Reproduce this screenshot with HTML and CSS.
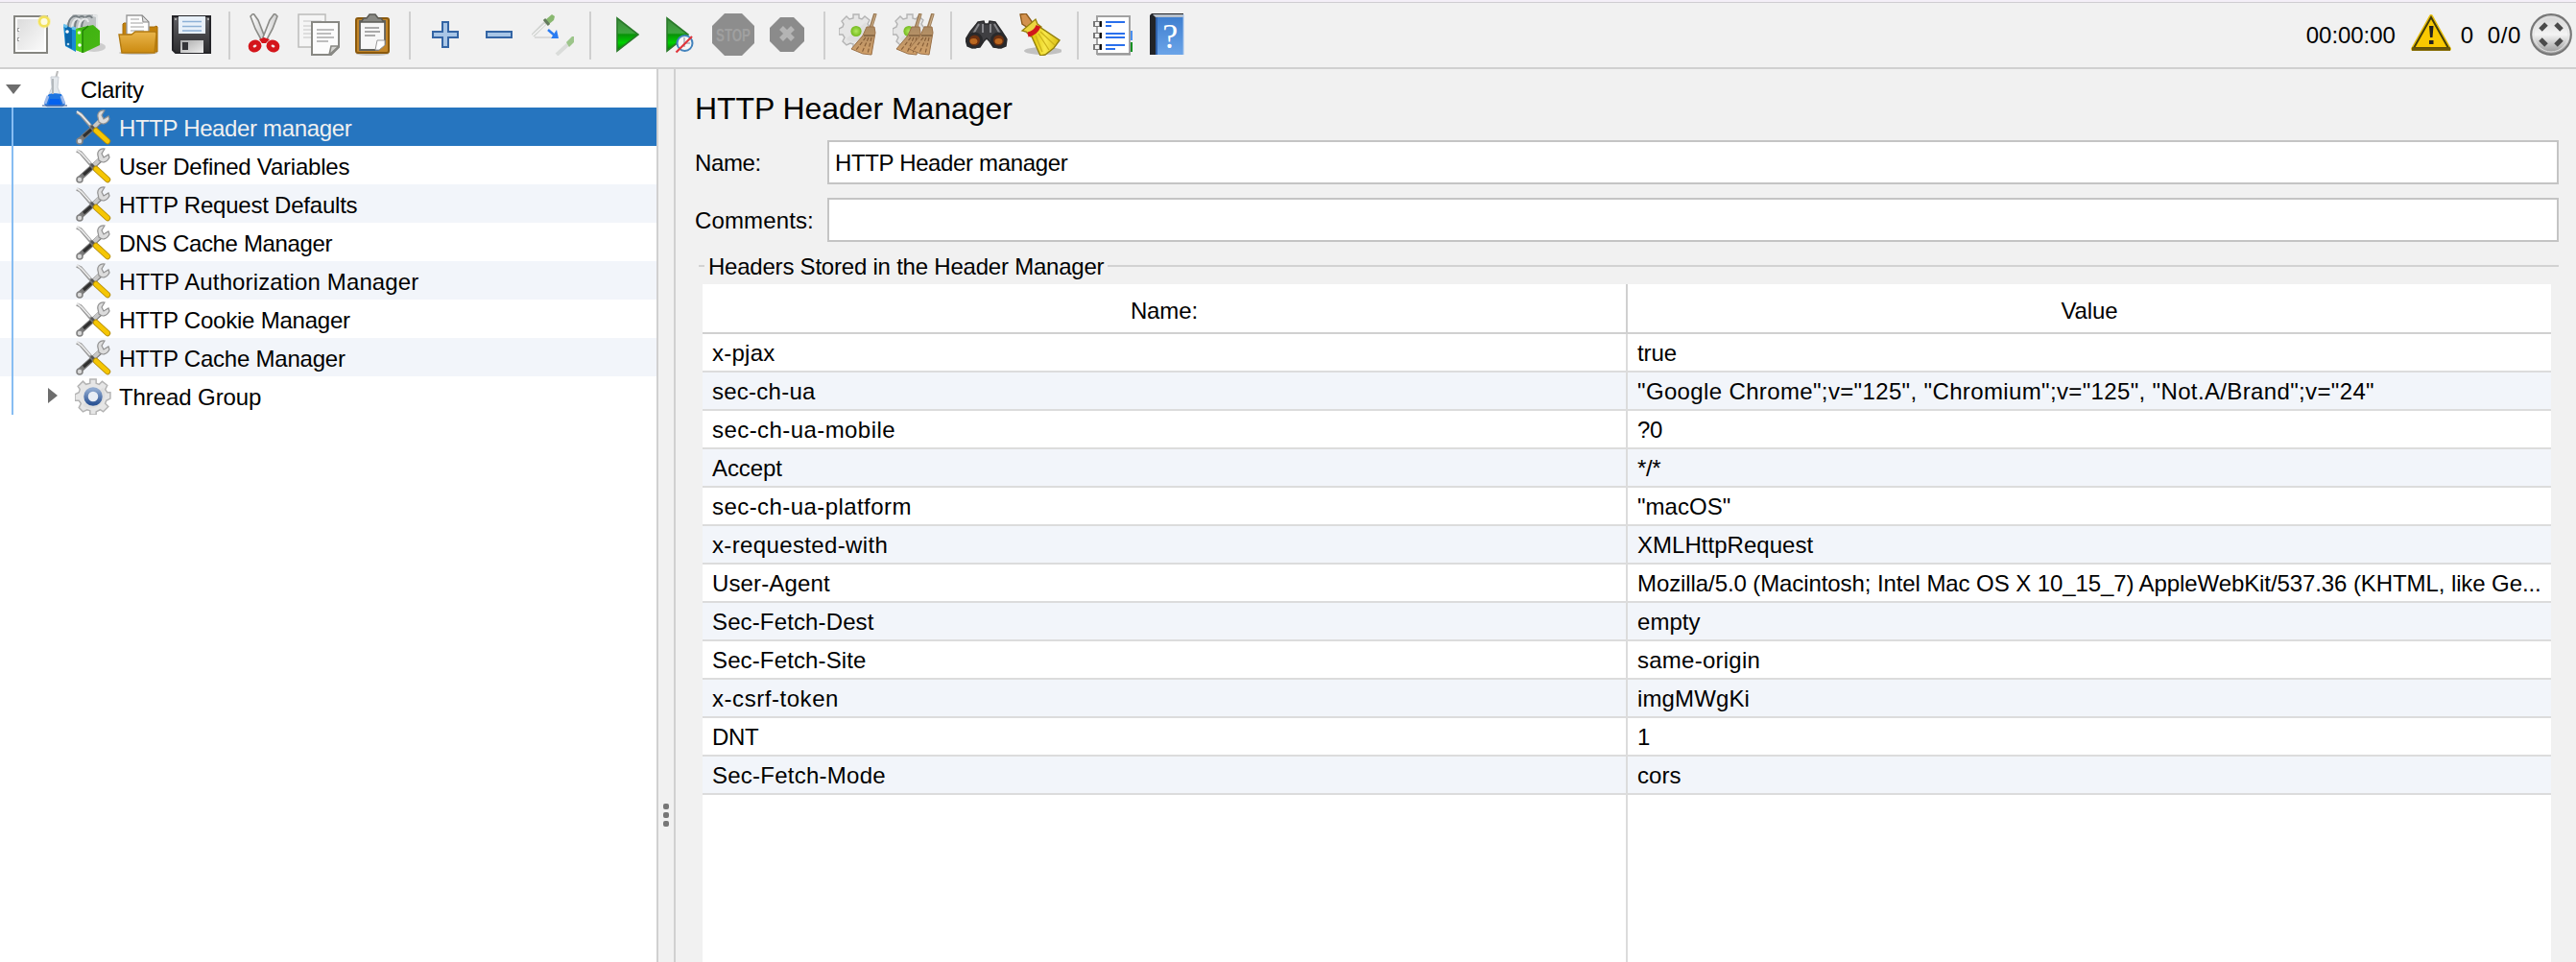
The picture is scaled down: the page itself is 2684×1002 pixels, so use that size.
FILE: index.html
```html
<!DOCTYPE html>
<html lang="en">
<head>
<meta charset="utf-8">
<title>HTTP Header Manager</title>
<link rel="stylesheet" href="styles.css">
</head>
<body>
<svg class="defs" aria-hidden="true">
  <defs>
    <linearGradient id="paper" x1="0" y1="0" x2="1" y2="1"><stop offset="0" stop-color="#dcdcdc"/><stop offset="1" stop-color="#fafafa"/></linearGradient>
    <linearGradient id="folder" x1="0" y1="0" x2="0" y2="1"><stop offset="0" stop-color="#e9b54b"/><stop offset="1" stop-color="#cb8a10"/></linearGradient>
    <linearGradient id="leaf" x1="0" y1="0" x2="1" y2="1"><stop offset="0" stop-color="#3db010"/><stop offset="1" stop-color="#48b814"/></linearGradient>
    <linearGradient id="play" x1="0" y1="0" x2="0" y2="1"><stop offset="0" stop-color="#3c8c3c"/><stop offset=".45" stop-color="#3fa63f"/><stop offset=".5" stop-color="#089208"/><stop offset=".75" stop-color="#00d000"/><stop offset="1" stop-color="#007a00"/></linearGradient>
    <linearGradient id="blade" x1="0" y1="0" x2="1" y2="0"><stop offset="0" stop-color="#fff"/><stop offset="1" stop-color="#ccc"/></linearGradient>
    <linearGradient id="straw" x1="0" y1="0" x2="1" y2="0"><stop offset="0" stop-color="#dcc000"/><stop offset=".5" stop-color="#f8e84a"/><stop offset="1" stop-color="#d8bc10"/></linearGradient>
    <linearGradient id="book" x1="0" y1="0" x2="0" y2="1"><stop offset="0" stop-color="#3f7fd0"/><stop offset="1" stop-color="#6ba4e8"/></linearGradient>
    <linearGradient id="metal" x1="0" y1="0" x2="0" y2="1"><stop offset="0" stop-color="#d2d2d2"/><stop offset=".5" stop-color="#f4f4f4"/><stop offset="1" stop-color="#909090"/></linearGradient>
    <linearGradient id="slider" x1="0" y1="0" x2="1" y2="1"><stop offset="0" stop-color="#aaa"/><stop offset="1" stop-color="#eee"/></linearGradient>
    <linearGradient id="dark" x1="0" y1="0" x2="0" y2="1"><stop offset="0" stop-color="#606064"/><stop offset="1" stop-color="#2c2c2e"/></linearGradient>
    <linearGradient id="ring" x1="0" y1="0" x2="0" y2="1"><stop offset="0" stop-color="#8fa9cf"/><stop offset="1" stop-color="#2d5596"/></linearGradient>
    <linearGradient id="bristle" x1="0" y1="0" x2="0" y2="1"><stop offset="0" stop-color="#ab8b64"/><stop offset="1" stop-color="#d2a069"/></linearGradient>
    <radialGradient id="ball"><stop offset="0" stop-color="#b2ea60"/><stop offset="1" stop-color="#73b91c"/></radialGradient>
  </defs>
  <symbol id="gear" viewBox="0 0 36 36">
    <path d="M15 5V1h6v4l3 1 3-3 5 4-2 4 2 3h3v6l-4 2-1 3 3 3-5 5-3-2-4 2v3h-6v-4l-3-1-4 2-4-4 2-4-2-3H0v-6l4-2 1-3-2-3 5-5 3 3z" fill="#e6e6e6" stroke="#b4b4b4" stroke-width="1.4"/>
    <path d="M8 26l20-17a14 14 0 0 1-19 19z" fill="#d4d4d4" opacity=".45"/>
  </symbol>
  <symbol id="broom" viewBox="0 0 28 44">
    <path d="M26 0L21 16" stroke="#9a7a55" stroke-width="3.6"/>
    <path d="M26 1L22 14" stroke="#c8ab85" stroke-width="1.2"/>
    <path d="M17 14h8l1 6-4 23-9-1-12-5 12-14z" fill="url(#bristle)" stroke="#9a7148" stroke-width="1"/>
    <path d="M14 23h11" stroke="#8c6c48" stroke-width="2"/>
    <path d="M16 25L6 38M19 25l-7 16M22 25l-4 17" stroke="#845c36" stroke-width="1.1" stroke-dasharray="4 2"/>
  </symbol>
  <symbol id="tools" viewBox="0 0 38 38">
    <path d="M2 3l4 2 12 14" fill="none" stroke="#969696" stroke-width="3.6"/>
    <path d="M2 2l5 4 9 10" fill="none" stroke="#e8e8e8" stroke-width="1.8"/>
    <path d="M6 31L27 12" stroke="#777" stroke-width="5.4" stroke-linecap="round"/>
    <path d="M20 18L28 10" stroke="#c8c8c8" stroke-width="4"/>
    <path d="M9 28l8-7" stroke="#303030" stroke-width="3"/>
    <circle cx="5" cy="33" r="3" fill="#d8d8d8" stroke="#838383" stroke-width="1.6"/>
    <path d="M31 1c-5-1-8 3-7 7l1 5c3 3 8 3 11-3l-1-3-5 3-2-4z" fill="#dcdcdc" stroke="#919191" stroke-width="1.2"/>
    <path d="M17 17l5 5" stroke="#555" stroke-width="2.4"/>
    <path d="M22 22l12 11" stroke="#b28b08" stroke-width="6.4" stroke-linecap="round"/>
    <path d="M22 22l12 11" stroke="#f5c604" stroke-width="4.6" stroke-linecap="round"/>
  </symbol>
</svg>

<header class="toolbar">
  <div class="group">
    <svg class="icon" viewBox="0 0 44 44"><rect x="5" y="3" width="34" height="38" fill="#fff" stroke="#858580" stroke-width="2"/><rect x="8" y="6" width="28" height="32" fill="url(#paper)"/><path d="M8 17h2M8 27h2" stroke="#999" stroke-width="4"/><path d="M9 17h2M9 27h2" stroke="#fff" stroke-width="2"/><circle cx="36" cy="8.500" r="7" fill="#f6eca0" opacity=".7"/><circle cx="36" cy="8.500" r="4.800" fill="#fdfbe0" stroke="#f3e25a" stroke-width="2.500"/></svg>
    <svg class="icon" viewBox="0 0 44 44"><ellipse cx="32" cy="35" rx="12" ry="5" fill="#999" opacity=".4"/><path d="M3 12L10 1h22l4 1v14l-6 6H4z" fill="#bfc3c5"/><path d="M5 14C5 3 14 0 16 5M12 15C12 3 21 0 23 6M19 14C20 3 28 0 30 5" fill="none" stroke="#777f83" stroke-width="2"/><path d="M9 14C10 5 17 3 18 9M16 15C17 5 25 3 26 9M31 2l4 1v14" fill="none" stroke="#e7e9ea" stroke-width="2"/><path d="M0 12l5 2 8 2v24L2 34z" fill="#178bd2"/><path d="M2 12l7 4v21l-7-4z" fill="#0a66ab"/><path d="M0 12l4 2M9 15l4 1" stroke="#6bc3ee" stroke-width="3"/><path d="M13 16l8-2 10-2 7 6v15l-17 8-8-3z" fill="url(#leaf)"/><path d="M13 16l7 2v23l-7-3z" fill="#57d51c"/><path d="M20 18l6-5M20 18v23" stroke="#228107" stroke-width="1.500"/><circle cx="4" cy="19" r="1.800" fill="#fff"/><circle cx="16.500" cy="20" r="1.800" fill="#e6ffd9"/><circle cx="17" cy="33" r="1.800" fill="#fff"/><circle cx="5" cy="32" r="1.300" fill="#bde"/></svg>
    <svg class="icon" viewBox="0 0 44 44"><ellipse cx="22" cy="41" rx="20" ry="2" fill="#999" opacity=".5"/><path d="M6 11l1-1h6l2 4h24l2-1 1 1v26H6z" fill="#c4820c" stroke="#a46c0a"/><path d="M10 2h16l7 7v13H10z" fill="#fff" stroke="#999" stroke-width="1.400"/><path d="M26 2l1 7h6z" fill="#ddd" stroke="#888"/><path d="M14 6h9M14 10h13M14 14h14M14 18h14" stroke="#c0c0c0" stroke-width="1.500"/><path d="M2 22h13l4-3h21l1 2-2 20H5z" fill="url(#folder)" stroke="#b27a10" stroke-width="1.400"/></svg>
    <svg class="icon" viewBox="0 0 44 44"><path d="M2 3h39v38H5l-3-3z" fill="url(#dark)" stroke="#242428" stroke-width="2"/><rect x="8" y="3" width="28" height="18" fill="#e8f0f9"/><path d="M12 8.500h20M12 13.500h20M12 18h20" stroke="#8db0d6" stroke-width="1.600"/><rect x="10" y="28" width="24" height="13" fill="url(#slider)"/><rect x="12" y="30" width="6" height="8" fill="#353538"/><path d="M4 5h2v2H4zM38 5h2v2h-2z" fill="#aaa"/></svg>
  </div>
  <i class="sep"></i>
  <div class="group">
    <svg class="icon" viewBox="0 0 44 44"><path d="M7 3l3-3 5 7 7 18-3 4-7-13z" fill="url(#blade)" stroke="#8b8b87" stroke-width="1.600"/><path d="M35 3l-3-3-5 7-7 18 3 4 7-13z" fill="url(#blade)" stroke="#8b8b87" stroke-width="1.600"/><path d="M16 27l5-2 6 2-4 4h-4z" fill="#d4151b"/><ellipse cx="11.500" cy="34" rx="4.500" ry="3.800" transform="rotate(-25 11.500 34)" fill="#f1e9e9" stroke="#d4151b" stroke-width="5"/><ellipse cx="30.500" cy="34" rx="4.500" ry="3.800" transform="rotate(25 30.500 34)" fill="#f1e9e9" stroke="#d4151b" stroke-width="5"/></svg>
    <svg class="icon" viewBox="0 0 44 44"><rect x="1" y="1" width="28" height="34" fill="#f5f5f5" stroke="#bcbcba" stroke-width="1.500"/><path d="M6 8h19M6 13h9M6 17h8M6 21h8M6 25h8" stroke="#ddd" stroke-width="1.800"/><path d="M15 9h28v26l-8 8H15z" fill="#fcfcfc" stroke="#888883" stroke-width="2"/><path d="M20 17h18M20 21h15M20 25h18M20 29h12" stroke="#bdbdbd" stroke-width="1.800"/><path d="M43 34h-8l-2 9z" fill="#d5d5d2" stroke="#888883" stroke-width="1.600"/></svg>
    <svg class="icon" viewBox="0 0 44 44"><ellipse cx="22" cy="42" rx="17" ry="2" fill="#999" opacity=".5"/><rect x="5" y="5" width="34" height="36" rx="2" fill="#c28528" stroke="#8a590d" stroke-width="2"/><path d="M9 8h26v24l-7 6H9z" fill="#f7f7f7" stroke="#60605c" stroke-width="1.800"/><path d="M14 15h15M14 19h16M14 23h11" stroke="#aaa" stroke-width="1.800"/><path d="M35 28h-8l-2 10h4l6-5z" fill="#fff" stroke="#999"/><path d="M10 9l3-4h3l3-4h6l3 4h3l3 4z" fill="#898984" stroke="#5b5b56" stroke-width="1.500"/></svg>
  </div>
  <i class="sep"></i>
  <div class="group">
    <svg class="icon" viewBox="0 0 44 44"><path d="M19 9h6v10h10v6H25v10h-6V25H9v-6h10z" fill="#a9c6e6" stroke="#3465a4" stroke-width="2"/></svg>
    <svg class="icon" viewBox="0 0 44 44"><rect x="9" y="19" width="26" height="6" fill="#a9c6e6" stroke="#3465a4" stroke-width="2"/></svg>
    <svg class="icon" viewBox="0 0 44 44"><path d="M1 23L15 9" stroke="#d0d3d0" stroke-width="4"/><path d="M1 23L14 11" stroke="#f5f5f5" stroke-width="1.500"/><path d="M14 7l7-6 3 2-1 4-6 5z" fill="#89b870"/><path d="M13 6l5 6" stroke="#637a5c" stroke-width="3"/><path d="M3 25h17" stroke="#d2d2d2" stroke-width="1.500"/><path d="M17 17l7 6" stroke="#2a7cf2" stroke-width="2.500"/><path d="M20 26l8 0-2-9z" fill="#2a7cf2"/><path d="M26 43L38 32" stroke="#dadcda" stroke-width="4"/><path d="M36 30l6-6h2v6l-5 5z" fill="#9cc58a"/></svg>
  </div>
  <i class="sep"></i>
  <div class="group">
    <svg class="icon" viewBox="0 0 44 44"><path d="M13 5l22 17-22 17z" fill="url(#play)" stroke="#2a7a2a" stroke-width="1.600"/></svg>
    <svg class="icon" viewBox="0 0 44 44"><path d="M9 5l22 17-22 17z" fill="url(#play)" stroke="#2a7a2a" stroke-width="1.600"/><circle cx="27.500" cy="31" r="8" fill="#f5f5f5" stroke="#4383bd" stroke-width="2"/><path d="M27 31v-6M27 31h6M27 31v4" stroke="#aab" stroke-width="1.500"/><path d="M18.500 40.500L35 24" stroke="#df343a" stroke-width="2.200"/></svg>
    <svg class="icon" viewBox="0 0 44 44"><path d="M13 0h18l13 13v18L31 44H13L0 31V13z" fill="#8d8d8d"/><text class="stop" x="4" y="29" textLength="36" lengthAdjust="spacingAndGlyphs">STOP</text></svg>
    <svg class="icon" viewBox="0 0 44 44"><path d="M15 4h14l11 11v14L29 40H15L4 29V15z" fill="#8b8b8b"/><path d="M16 15l12 12M28 15L16 27" stroke="#b4b4b4" stroke-width="5.500"/></svg>
  </div>
  <i class="sep"></i>
  <div class="group">
    <svg class="icon" viewBox="0 0 44 44"><use href="#gear" x="0" y="0" width="36" height="36"/><circle cx="18" cy="18.500" r="5.600" fill="url(#ball)"/><use href="#broom" x="12" y="0" width="28" height="44"/></svg>
    <svg class="icon" viewBox="0 0 44 44"><use href="#gear" x="0" y="0" width="36" height="36"/><circle cx="17" cy="18.500" r="5.600" fill="url(#ball)"/><use href="#broom" x="3" y="0" width="28" height="44"/><use href="#broom" x="16" y="0" width="28" height="44"/></svg>
  </div>
  <i class="sep"></i>
  <div class="group">
    <svg class="icon" viewBox="0 0 44 44"><path d="M13 9l6-1 1 3h4l1-3 6 1 7 10 5 8-1 7-5 2-8-1-4-6-3-3-3 3-4 6-8 1-5-2-2-7 5-8z" fill="#3f3f42" stroke="#29292b" stroke-width="1.400"/><path d="M14 11l-7 12M30 11l7 12M18 11v9M26 11v9" stroke="#88888c" stroke-width="2"/><circle cx="9.500" cy="28" r="7" fill="#6b3010" stroke="#29292b" stroke-width="3"/><circle cx="34.500" cy="28" r="7" fill="#6b3010" stroke="#29292b" stroke-width="3"/><ellipse cx="8.500" cy="29" rx="4" ry="3" fill="#bb6820"/><ellipse cx="34.500" cy="29" rx="4" ry="3" fill="#bb6820"/></svg>
    <svg class="icon" viewBox="0 0 44 44"><ellipse cx="25" cy="39" rx="20" ry="4" fill="#888" opacity=".45"/><path d="M1 1l6-1 5 7 3 4-6 4-6-4z" fill="#d3924f" stroke="#8d5a1c" stroke-width="1.300"/><path d="M3 18l14-12 2 5 4 3-11 10-5-5z" fill="#edd640" stroke="#95820c" stroke-width="1.300"/><path d="M12 22l9-8 21 14-6 8-9 7-5 1z" fill="url(#straw)" stroke="#93800c" stroke-width="1.400"/><path d="M17 23l7 17M20 21l11 17M22 19l15 14" stroke="#cdb31b" stroke-width="1.300"/><path d="M9 22c5-1 9-4 11-9" fill="none" stroke="#d0181c" stroke-width="5"/></svg>
  </div>
  <i class="sep"></i>
  <div class="group">
    <svg class="icon" viewBox="0 0 44 44"><path d="M39 18h3v10h-3z" fill="#4a90f0"/><path d="M39 30h3v10h-3z" fill="#0e9020"/><path d="M5 3h34v39H5z" fill="#fff" stroke="#a2a2a2" stroke-width="2"/><path d="M5 43h35" stroke="#8a8a8a"/><path d="M14 9h20M14 21h20M14 25h20M14 33h20" stroke="#2a70ec" stroke-width="2"/><path d="M14 13h6M14 37h10" stroke="#2a70ec" stroke-width="2"/><path d="M1 11h8M1 23h8M1 35h8" stroke="#777" stroke-width="6"/><path d="M3 11h4M3 23h4M3 35h4" stroke="#f4f4f4" stroke-width="4"/><path d="M9 8v6M9 20v6M9 32v6" stroke="#111" stroke-width="2"/></svg>
    <svg class="icon" viewBox="0 0 44 44"><path d="M4 2l2-2h33v3H12v40H4z" fill="#222428"/><path d="M7 1h32v3H10z" fill="#b7c0cb"/><path d="M11 4h28v39H11z" fill="url(#book)"/><path d="M11 4v39" stroke="#2f62ab" stroke-width="2"/><path d="M39 1v42" stroke="#9dc0ec" stroke-width="1"/><text class="question" x="25" y="36">?</text></svg>
  </div>
  <div class="status">
    <span class="time">00:00:00</span>
    <svg class="warning" viewBox="0 0 44 40"><path d="M22 3L41 37H3z" fill="#f9c901" stroke="#e8c010" stroke-width="4" stroke-linejoin="round"/><path d="M22 4L40 36H4z" fill="#f9c901" stroke="#443c08" stroke-width="2"/><path d="M2 37h40" stroke="#6a5608" stroke-width="3.500"/><path d="M20 13h4.500l-1 12h-2.500zM20 28h4.500v4H20z" fill="#222"/></svg>
    <span class="errors">0</span>
    <span class="threads">0/0</span>
    <svg class="icon" viewBox="0 0 44 44"><circle cx="22" cy="22" r="20.800" fill="url(#metal)" stroke="#777" stroke-width="2.200"/><circle cx="22" cy="22" r="18" fill="none" stroke="#e4e4e4" stroke-width="1"/><path d="M11 17l6-6M27 11l6 6M11 27l6 6M27 33l6-6" stroke="#4a4a4a" stroke-width="5"/></svg>
  </div>
</header>

<main class="workspace">
  <nav class="tree">
    <div class="node root"><svg class="arrow" viewBox="0 0 18 12"><path d="M1 1h16L9 11z" fill="#6d6d6d"/></svg><svg class="flask" viewBox="0 0 28 38"><path d="M17 0l-2 8" stroke="#bbb" stroke-width="2"/><path d="M10 6h8l-1 11 7 17-2 3H6l-2-3 7-17z" fill="#e4e8ec" stroke="#c8cdd4" stroke-width="1"/><path d="M7 25c5-3 10-1 14-1l4 10-2 3H5l-2-3z" fill="#1e74e0"/><path d="M9 29h10l2 7H7z" fill="#0562ee"/><path d="M4 34l3-8M24 34l-3-8" stroke="#9db9ea" stroke-width="3"/><path d="M1 36h26" stroke="#5b78a8" stroke-width="1.300"/><path d="M12 8v16" stroke="#b3b8bc" stroke-width="2"/></svg><span>Clarity</span></div>
    <div class="children">
      <div class="node selected"><svg class="leaf"><use href="#tools"/></svg><span>HTTP Header manager</span></div>
      <div class="node"><svg class="leaf"><use href="#tools"/></svg><span class="track-1">User Defined Variables</span></div>
      <div class="node"><svg class="leaf"><use href="#tools"/></svg><span class="track-1">HTTP Request Defaults</span></div>
      <div class="node"><svg class="leaf"><use href="#tools"/></svg><span>DNS Cache Manager</span></div>
      <div class="node"><svg class="leaf"><use href="#tools"/></svg><span class="track-4">HTTP Authorization Manager</span></div>
      <div class="node"><svg class="leaf"><use href="#tools"/></svg><span class="track-1">HTTP Cookie Manager</span></div>
      <div class="node"><svg class="leaf"><use href="#tools"/></svg><span class="track-1">HTTP Cache Manager</span></div>
      <div class="node branch"><svg class="closed" viewBox="0 0 12 18"><path d="M1 1l10 8-10 8z" fill="#6d6d6d"/></svg><svg class="leaf" viewBox="0 0 38 38"><use href="#gear" width="38" height="38"/><circle cx="19" cy="19" r="7.500" fill="#e8edf5" stroke="url(#ring)" stroke-width="4.500"/></svg><span class="track-2">Thread Group</span></div>
    </div>
  </nav>
  <div class="splitter"><i></i><i></i><i></i></div>
  <section class="editor">
    <h1>HTTP Header Manager</h1>
    <label class="field"><span>Name:</span><input type="text" value="HTTP Header manager"></label>
    <label class="field"><span class="track-4">Comments:</span><input type="text" value=""></label>
    <div class="caption"><span class="track-1">Headers Stored in the Header Manager</span></div>
    <div class="table">
      <div class="row head"><div>Name:</div><div>Value</div></div>
      <div class="row"><div class="track-5">x-pjax</div><div class="track-2">true</div></div>
      <div class="row"><div class="track-5">sec-ch-ua</div><div class="track-6">"Google Chrome";v="125", "Chromium";v="125", "Not.A/Brand";v="24"</div></div>
      <div class="row"><div class="track-7">sec-ch-ua-mobile</div><div>?0</div></div>
      <div class="row"><div class="track-2">Accept</div><div>*/*</div></div>
      <div class="row"><div class="track-7">sec-ch-ua-platform</div><div class="track-3">"macOS"</div></div>
      <div class="row"><div class="track-6">x-requested-with</div><div class="track-3">XMLHttpRequest</div></div>
      <div class="row"><div class="track-4">User-Agent</div><div class="track-2">Mozilla/5.0 (Macintosh; Intel Mac OS X 10_15_7) AppleWebKit/537.36 (KHTML, like Ge...</div></div>
      <div class="row"><div class="track-4">Sec-Fetch-Dest</div><div class="track-3">empty</div></div>
      <div class="row"><div class="track-4">Sec-Fetch-Site</div><div class="track-5">same-origin</div></div>
      <div class="row"><div class="track-8">x-csrf-token</div><div class="track-4">imgMWgKi</div></div>
      <div class="row"><div>DNT</div><div>1</div></div>
      <div class="row"><div class="track-5">Sec-Fetch-Mode</div><div class="track-3">cors</div></div>
      <div class="row blank"><div></div><div></div></div>
    </div>
  </section>
</main>
</body>
</html>
```
FILE: styles.css
```css
* { box-sizing: border-box; }

body {
  margin: 0;
  height: 1002px;
  overflow: hidden;
  display: flex;
  flex-direction: column;
  background: #f1f1f1;
  color: #000;
  font-family: "Liberation Sans", Arial, sans-serif;
  font-size: 24px;
  line-height: 40px;
  letter-spacing: -0.35px;
  white-space: nowrap;
}

svg { display: block; flex: none; }
.defs { position: absolute; width: 0; height: 0; }

/* Letter tracking steps, from tight to loose */
.track-1 { letter-spacing: -0.22px; }
.track-2 { letter-spacing: -0.09px; }
.track-3 { letter-spacing: 0.03px; }
.track-4 { letter-spacing: 0.13px; }
.track-5 { letter-spacing: 0.25px; }
.track-6 { letter-spacing: 0.36px; }
.track-7 { letter-spacing: 0.43px; }
.track-8 { letter-spacing: 0.55px; }

.toolbar {
  flex: none;
  height: 72px;
  display: flex;
  align-items: center;
  padding: 0 4px 0 10px;
  border-bottom: 2px solid #d0d0d0;
  background: linear-gradient(#f4eff8 2px, #cfcdd1 2px, #cfcdd1 3px, #f1f1f1 3px);
}
.group { display: flex; gap: 12px; padding-top: 2px; }
.icon { width: 44px; height: 44px; }
.sep { width: 2px; height: 50px; margin: 4px 14px 0 16px; background: #cfcfcf; }
.stop { font-size: 19px; font-weight: bold; fill: #a0a0a0; letter-spacing: 0; }
.question { font: 36px "Liberation Serif", serif; fill: #fff; text-anchor: middle; }

.status { display: flex; align-items: center; margin-left: auto; padding-top: 2px; }
.time { letter-spacing: -0.05px; padding-top: 2px; }
.warning { width: 44px; height: 40px; margin: -4px 9px 0 15px; }
.errors { margin-right: 15px; padding-top: 2px; }
.threads { margin-right: 9px; padding-top: 2px; letter-spacing: 0.6px; }

.workspace { flex: 1; min-height: 0; display: flex; }

.tree { width: 684px; background: #fff; }
.node { height: 40px; display: flex; align-items: center; }
.node span { padding-top: 3px; }
.root { padding-left: 5px; }
.arrow { width: 18px; height: 12px; margin: 2px 20px 0 0; }
.flask { width: 28px; height: 38px; margin: 2px 13px 0 0; }
.children .node { padding-left: 78px; background: linear-gradient(90deg, #fff 12px, #87bdf2 12px, #87bdf2 14px, #fff 14px); }
.children .node:nth-child(2n+3) { background: linear-gradient(90deg, #f2f5fa 12px, #87bdf2 12px, #87bdf2 14px, #f2f5fa 14px); }
.children .selected { background: linear-gradient(90deg, #2675bf 12px, #87bdf2 12px, #87bdf2 14px, #2675bf 14px); color: #f0f0f0; }
.children .branch { padding-left: 49px; }
.closed { width: 12px; height: 18px; margin-right: 17px; }
.leaf { width: 38px; height: 38px; margin: 1px 8px 0 0; }

.splitter {
  width: 20px;
  border: solid #d0d0d0;
  border-width: 0 2px;
  display: flex;
  flex-direction: column;
  align-items: center;
  justify-content: flex-end;
  gap: 3px;
  padding-bottom: 141px;
}
.splitter i { width: 6px; height: 6px; border-radius: 2px; background: #777; }

.editor { flex: 1; min-width: 0; display: flex; flex-direction: column; padding: 21px 18px 0 20px; }
h1 { margin: 0 0 13px; font-size: 32px; font-weight: normal; line-height: 40px; letter-spacing: -0.06px; }
.field { display: flex; align-items: center; height: 46px; margin-bottom: 14px; }
.field span { width: 138px; padding-top: 2px; }
.field input {
  flex: 1;
  height: 46px;
  padding: 2px 6px 0;
  border: 2px solid #c4c4c4;
  background: #fff;
  color: inherit;
  font: inherit;
  letter-spacing: inherit;
  outline: 0;
}
.caption { display: flex; align-items: center; height: 30px; margin: -4px 0 0 4px; line-height: 30px; gap: 4px; }
.caption span { padding-top: 2px; }
.caption::before, .caption::after { content: ""; height: 2px; background: #d2d2d2; width: 6px; }
.caption::after { flex: 1; }

.table { flex: 1; min-height: 0; display: flex; flex-direction: column; margin: 4px 8px 0; background: #fff; }
.row { flex: none; height: 40px; display: grid; grid-template-columns: 964px 1fr; border-bottom: 2px solid #dcdcdc; }
.row > div { padding: 0 10px; line-height: 40px; overflow: hidden; }
.row > div:first-child { border-right: 2px solid #dcdcdc; }
.row:nth-child(2n+3) { background: #f2f5fa; }
.head { height: 52px; border-color: #d0d0d0; text-align: center; }
.head > div { line-height: 55px; letter-spacing: -0.1px; }
.head > div:first-child { border-color: #d0d0d0; }
.row.blank { flex: 1; border: 0; background: #fff; }
```
